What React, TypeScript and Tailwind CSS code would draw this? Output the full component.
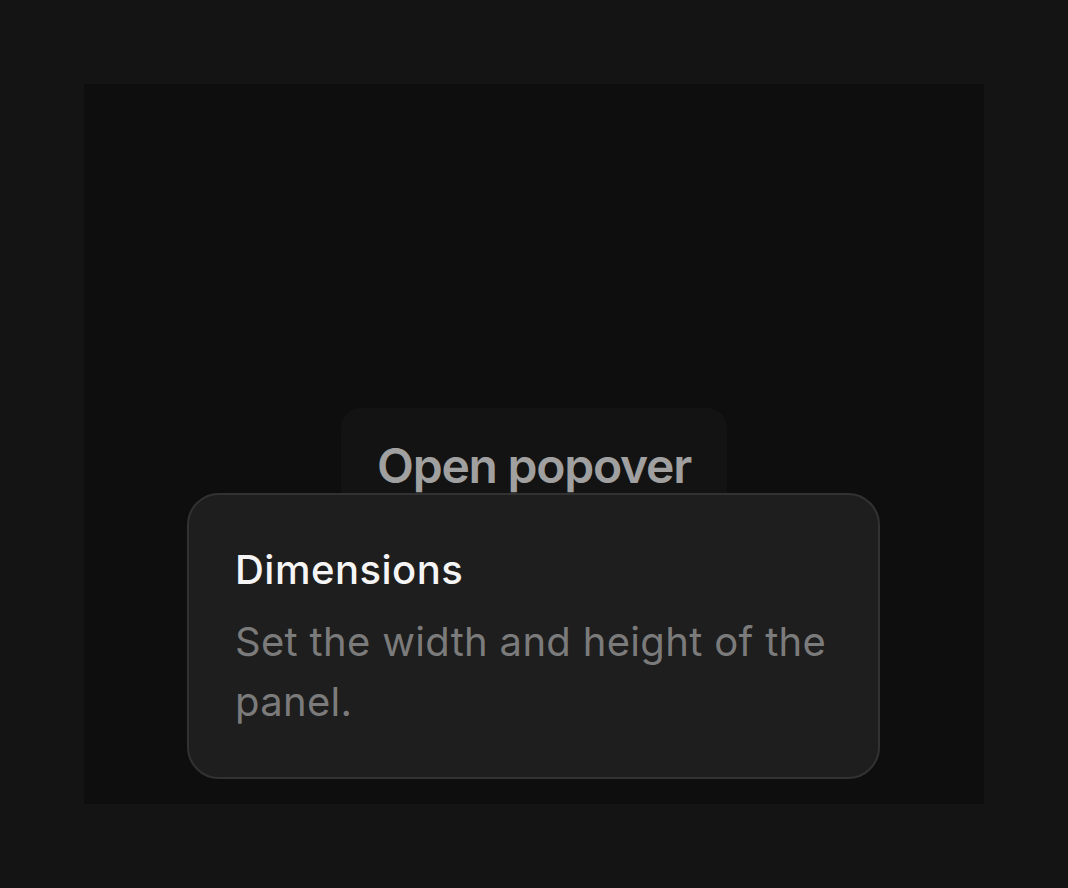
export default function App() {
  return (
    <div
      className="w-[1068px] h-[888px] bg-[#141414] p-[84px]"
      style={{ fontFamily: 'Inter, "Liberation Sans", sans-serif' }}
    >
      <div className="relative w-[900px] h-[720px] bg-[#0e0e0e] flex flex-col items-center pt-[324px]">
        <button className="px-[36px] pt-[22px] pb-[22px] rounded-[20px] bg-[#131313] text-[#a0a0a0] text-[48px] leading-[72px] font-semibold tracking-[-0.026em]">
          Open popover
        </button>

        {/* popover */}
        <div className="absolute left-[103px] top-[409px] w-[693px] rounded-[32px] border-2 border-[#323232] bg-[#1e1e1e] px-[46px] pt-[45px] pb-[45px]">
          <div className="text-[40px] leading-[60px] font-medium text-[#f5f5f5] tracking-[0.012em]">Dimensions</div>
          <div className="mt-[12px] text-[40px] leading-[60px] text-[#7b7b7b] tracking-[0.008em]">
            Set the width and height of the panel.
          </div>
        </div>
      </div>
    </div>
  );
}
